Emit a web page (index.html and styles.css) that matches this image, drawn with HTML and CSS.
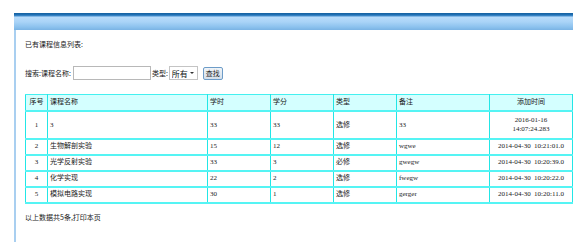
FILE: index.html
```html
<!DOCTYPE html>
<html>
<head>
<meta charset="utf-8">
<link rel="stylesheet" href="styles.css">
</head>
<body>
<div class="frame">
  <div class="topbar"></div>
  <div class="content">
    <div class="title">已有课程信息列表:</div>
    <div class="search">
      <span class="lbl">搜索:课程名称:</span>
      <input class="txt" type="text">
      <span class="lbl">类型:</span>
      <span class="sel"><select><option>所有</option></select></span>
      <button class="btn">查找</button>
    </div>
    <table class="grid">
      <colgroup>
        <col class="w1"><col class="w2"><col class="w3"><col class="w3"><col class="w3"><col class="w6"><col class="w7">
      </colgroup>
      <tr class="head">
        <td class="ctr">序号</td><td>课程名称</td><td>学时</td><td>学分</td><td>类型</td><td>备注</td><td class="ctr">添加时间</td>
      </tr>
      <tr class="first">
        <td class="ctr">1</td><td>3</td><td>33</td><td>33</td><td>选修</td><td>33</td><td class="ctr">2016-01-16<br>14:07:24.283</td>
      </tr>
      <tr>
        <td class="ctr">2</td><td>生物解剖实验</td><td>15</td><td>12</td><td>选修</td><td>wgwe</td><td class="ctr">2014-04-30 10:21:01.0</td>
      </tr>
      <tr>
        <td class="ctr">3</td><td>光学反射实验</td><td>33</td><td>3</td><td>必修</td><td>gwegw</td><td class="ctr">2014-04-30 10:20:39.0</td>
      </tr>
      <tr>
        <td class="ctr">4</td><td>化学实现</td><td>22</td><td>2</td><td>选修</td><td>fwegw</td><td class="ctr">2014-04-30 10:20:22.0</td>
      </tr>
      <tr>
        <td class="ctr">5</td><td>模拟电路实现</td><td>30</td><td>1</td><td>选修</td><td>gerger</td><td class="ctr">2014-04-30 10:20:11.0</td>
      </tr>
    </table>
    <div class="foot">以上数据共5条,打印本页</div>
  </div>
</div>
</body>
</html>
```

FILE: styles.css
```css
html, body {
  margin: 0;
  padding: 0;
  background: #fff;
  overflow: hidden;
}
body {
  font-family: "Liberation Serif", "Noto Sans CJK SC", serif;
  font-size: 7px;
  color: #1a1a1a;
}
.frame {
  margin: 13px 8px 0 14px;
  width: 559px;
}
.topbar {
  height: 17px;
  background: linear-gradient(to bottom, #14609f 0, #2272b6 2px, #4a92d0 3px, #b8dcfb 4px, #a9d3f7 9px, #8cc2ee 14px, #7ab3e4 17px);
}
.content {
  border-left: 2px solid #a9cff0;
  padding: 9px 0 0 9px;
  height: 212px;
  box-sizing: border-box;
}
.title {
  line-height: 10px;
  font-family: "Noto Sans CJK SC", sans-serif;
}
.search {
  display: flex;
  align-items: center;
  margin-top: 17px;
  height: 14px;
  font-family: "Noto Sans CJK SC", sans-serif;
}
.lbl {
  line-height: 10px;
}
.txt {
  width: 78px;
  height: 14px;
  box-sizing: border-box;
  border: 1px solid #b8b8b8;
  margin: 0 1px 0 2px;
  padding: 0;
}
.sel {
  position: relative;
  display: inline-block;
  width: 29px;
  height: 14px;
  margin-left: 1px;
}
.sel select {
  appearance: none;
  -webkit-appearance: none;
  width: 29px;
  height: 14px;
  box-sizing: border-box;
  border: 1px solid #c4c4c4;
  background: #fff;
  font-family: "Noto Sans CJK SC", sans-serif;
  font-size: 8px;
  padding: 0 0 0 2px;
  margin: 0;
  color: #111;
}
.sel::after {
  content: "";
  position: absolute;
  right: 4px;
  top: 6px;
  border-left: 2px solid transparent;
  border-right: 2px solid transparent;
  border-top: 2px solid #333;
}
.btn {
  margin-left: 5px;
  width: 20px;
  height: 13px;
  padding: 0;
  border: 1px solid #6d9cc8;
  border-radius: 2px;
  background: linear-gradient(to bottom, #f0f4f8, #d4dfea);
  font-family: "Noto Sans CJK SC", sans-serif;
  font-size: 7px;
  color: #222;
  line-height: 11px;
}
.grid {
  margin-top: 14px;
  width: 547px;
  border-collapse: collapse;
  table-layout: fixed;
  border: 1px solid #44f0f0;
}
.w1 { width: 22px; }
.w2 { width: 160px; }
.w3 { width: 63px; }
.w6 { width: 93px; }
.w7 { width: 83px; }
.grid td {
  border-left: 1px solid #22e6e6;
  border-right: 1px solid #22e6e6;
  border-top: 2px solid #55f4f4;
  border-bottom: 2px solid #55f4f4;
  padding: 2px 2px 3px 2px;
  line-height: 9px;
  height: 9px;
  vertical-align: middle;
  white-space: nowrap;
  overflow: hidden;
  word-spacing: 1.5px;
}
.grid .head td {
  background: #d4ffff;
  height: 10px;
  border-top: 1px solid #44f0f0;
}
.grid .first td {
  padding-top: 4px;
  padding-bottom: 4px;
}
.grid td.ctr {
  text-align: center;
}
.foot {
  margin-top: 8px;
  line-height: 10px;
  font-family: "Noto Sans CJK SC", sans-serif;
}
```
